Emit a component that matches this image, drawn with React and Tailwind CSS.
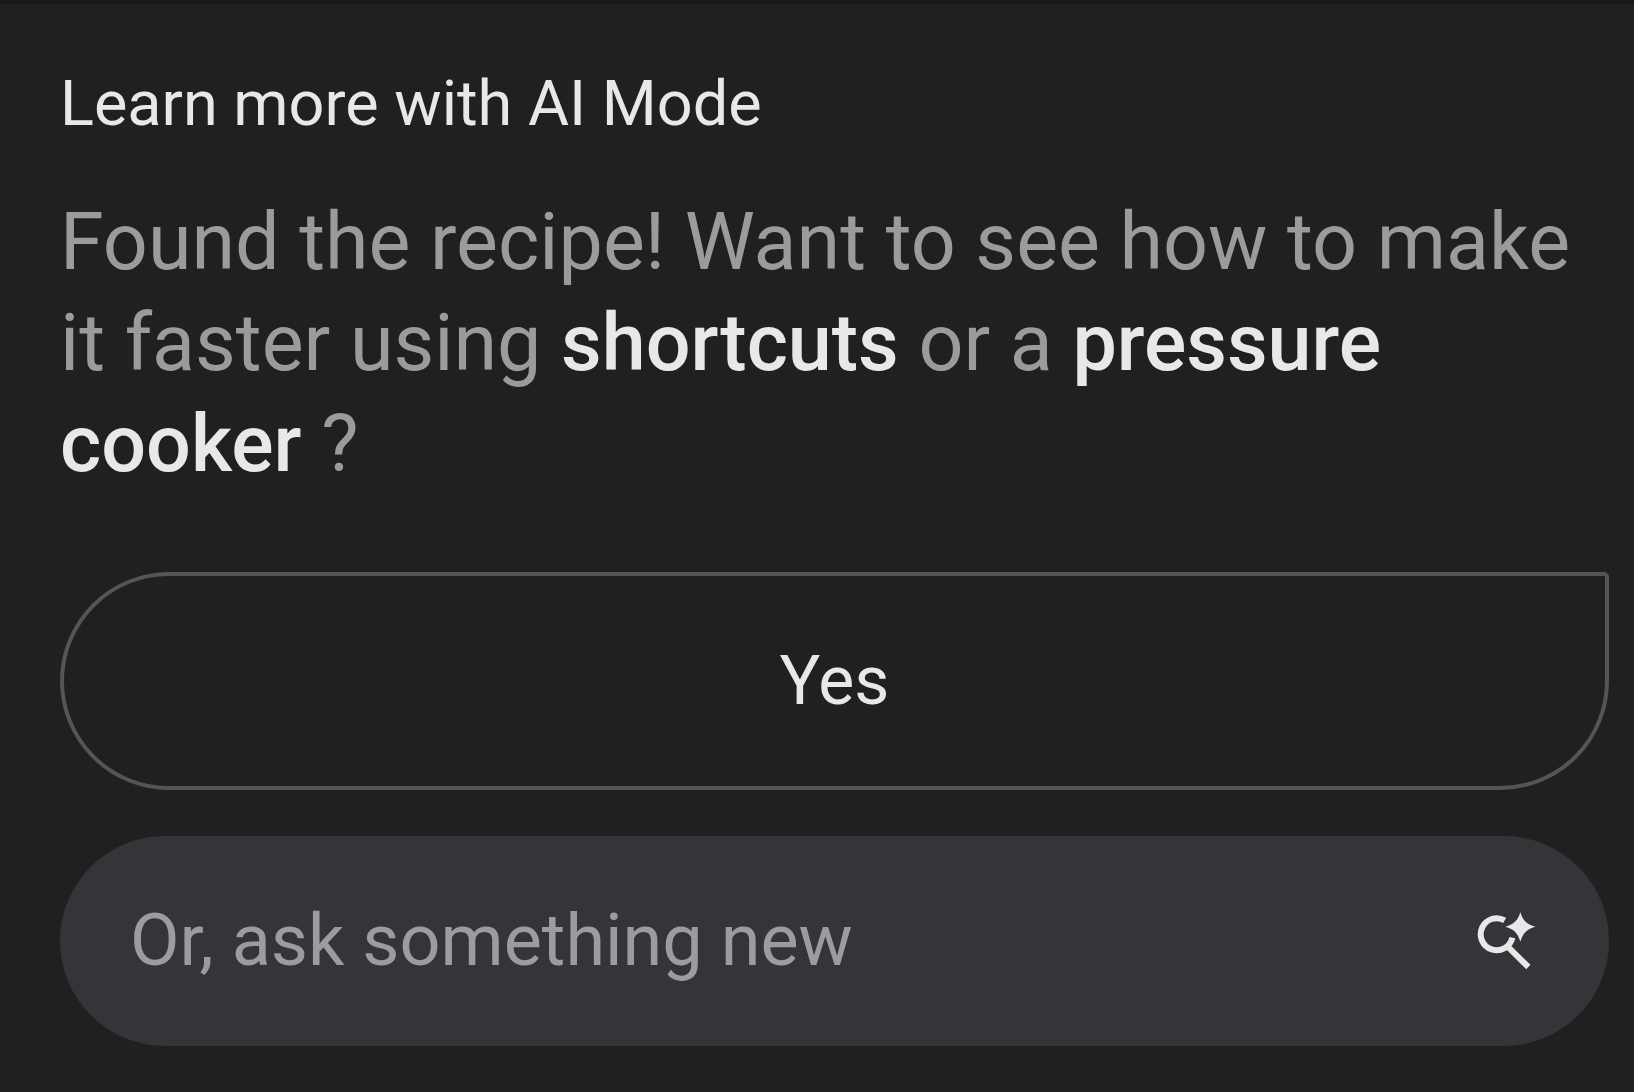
const SearchSparkIcon = () => (
  <svg className="h-[62px] w-[60px] shrink-0" viewBox="78 54 180 186" fill="none" aria-hidden="true">
    <path d="M164 85A48 48 0 1 0 187 137" stroke="currentColor" strokeWidth="18" />
    <path d="M170 161L235 225" stroke="currentColor" strokeWidth="18" />
    <path
      d="M211 60C218 85 230 97 256 104C230 111 218 124 211 149C204 124 192 111 166 104C192 97 204 85 211 60Z"
      fill="currentColor"
    />
  </svg>
);

const App = () => {
  return (
    <main className="min-h-screen border-t-4 border-[#191919] bg-[#202020] pt-[62px] pr-[25px] pb-11 pl-[60px] font-['Roboto',sans-serif] text-[#e8e8e8]">
      <h1 className="text-[63px] leading-[76px]">Learn more with AI Mode</h1>

      <p className="mt-[50px] text-[79px] leading-[101px] text-[#9b9b9b]">
        Found the recipe! Want to see how to make it faster using{' '}
        <strong className="font-medium text-[#e8e8e8]">shortcuts</strong> or a{' '}
        <strong className="font-medium text-[#e8e8e8]">pressure cooker</strong> ?
      </p>

      <button
        type="button"
        className="mt-[77px] block h-[218px] w-full rounded-[109px] rounded-tr-[5px] border-4 border-[#555] text-[68px] leading-[84px]"
      >
        Yes
      </button>

      <form
        onSubmit={(e) => e.preventDefault()}
        className="mt-[46px] flex h-[210px] items-center rounded-full bg-[#343539] pr-[73px] pl-[70px]"
      >
        <input
          type="text"
          aria-label="Ask something new"
          placeholder="Or, ask something new"
          className="h-[100px] min-w-0 flex-1 bg-transparent text-[72px] outline-none placeholder:text-[#9c9ca0]"
        />
        <button type="submit" aria-label="Search">
          <SearchSparkIcon />
        </button>
      </form>
    </main>
  );
};

export default App;
